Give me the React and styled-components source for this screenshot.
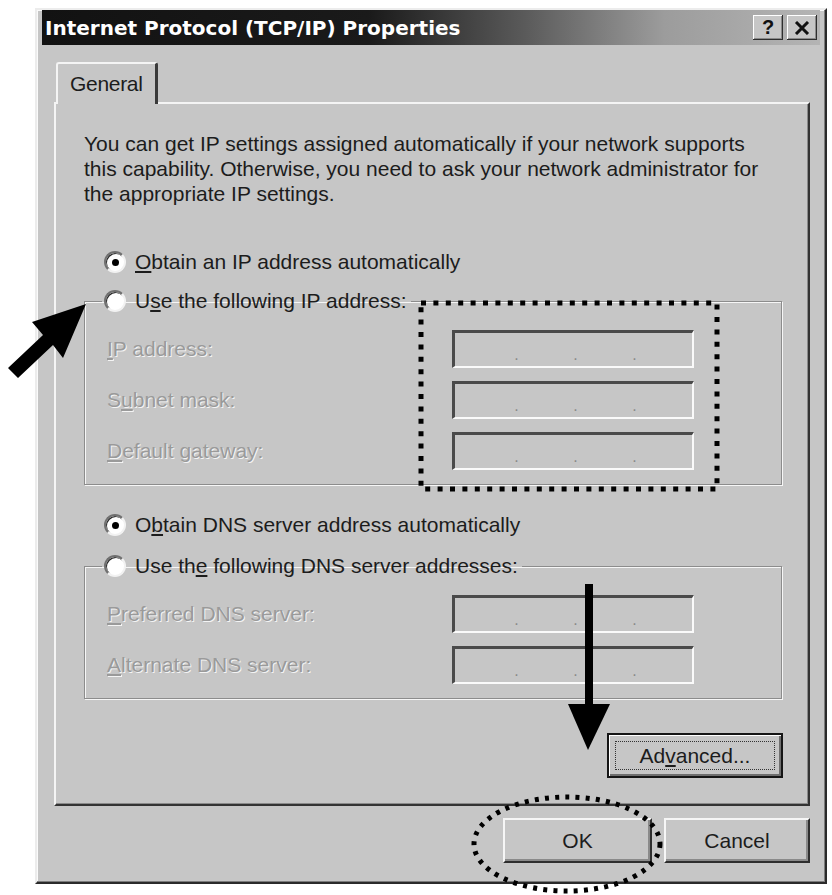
import styled, { createGlobalStyle } from "styled-components";

const GlobalStyle = createGlobalStyle`
  html, body {
    margin: 0;
    background: #fff;
  }
  body {
    font-family: "Liberation Sans", Arial, sans-serif;
  }
`;

const Mnemonic = ({ text, index }) => (
  <>
    {text.slice(0, index)}
    <U>{text[index]}</U>
    {text.slice(index + 1)}
  </>
);

const IpBox = () => (
  <IpInput>
    <Dot>.</Dot>
    <Dot>.</Dot>
    <Dot>.</Dot>
  </IpInput>
);

const Field = ({ text, index }) => (
  <FieldRow>
    <FieldLabel>
      <Mnemonic text={text} index={index} />
    </FieldLabel>
    <IpBox />
  </FieldRow>
);

const Radio = ({ checked, text, index }) => (
  <RadioRow>
    <RadioCircle>{checked && <RadioDot />}</RadioCircle>
    <span>
      <Mnemonic text={text} index={index} />
    </span>
  </RadioRow>
);

const App = () => {
  return (
    <Page>
      <GlobalStyle />
      <Window>
        <TitleBar>
          <Title>Internet Protocol (TCP/IP) Properties</Title>
          <CaptionButtons>
            <CaptionButton>?</CaptionButton>
            <CaptionButton>
              <svg width="16" height="14" viewBox="0 0 16 14">
                <path d="M2 1 L14 13 M14 1 L2 13" stroke="#111" strokeWidth="3" />
              </svg>
            </CaptionButton>
          </CaptionButtons>
        </TitleBar>

        <Body>
          <Tabs>
            <Tab>General</Tab>
          </Tabs>
          <Panel>
            <Desc>
              You can get IP settings assigned automatically if your network supports
              <br />
              this capability. Otherwise, you need to ask your network administrator for
              <br />
              the appropriate IP settings.
            </Desc>

            <Spaced $top={41}>
              <Radio checked text="Obtain an IP address automatically" index={0} />
            </Spaced>

            <Group $top={9}>
              <Legend>
                <Radio text="Use the following IP address:" index={1} />
              </Legend>
              <Fields>
                <Field text="IP address:" index={0} />
                <Field text="Subnet mask:" index={1} />
                <Field text="Default gateway:" index={0} />
              </Fields>
            </Group>

            <Spaced $top={25}>
              <Radio checked text="Obtain DNS server address automatically" index={1} />
            </Spaced>

            <Group $top={11}>
              <Legend>
                <Radio text="Use the following DNS server addresses:" index={6} />
              </Legend>
              <Fields>
                <Field text="Preferred DNS server:" index={0} />
                <Field text="Alternate DNS server:" index={0} />
              </Fields>
            </Group>

            <AdvancedRow>
              <AdvancedButton>
                <FocusRing>
                  <Mnemonic text="Advanced..." index={2} />
                </FocusRing>
              </AdvancedButton>
            </AdvancedRow>
          </Panel>

          <Footer>
            <PushButton $width={149}>OK</PushButton>
            <PushButton $width={146}>Cancel</PushButton>
          </Footer>
        </Body>
      </Window>

      <Annotations viewBox="0 0 832 895">
        <rect
          x="421"
          y="303"
          width="296"
          height="186"
          fill="none"
          stroke="#000"
          strokeWidth="5"
          strokeDasharray="5 7.4"
        />
        <ellipse
          cx="567"
          cy="844"
          rx="93"
          ry="47"
          fill="none"
          stroke="#000"
          strokeWidth="5"
          strokeDasharray="4 6.2"
        />
        <line x1="589" y1="584" x2="589" y2="710" stroke="#000" strokeWidth="8" />
        <polygon points="568,704 610,704 588,750" fill="#000" />
        <polygon points="86,304 32,322 43,335 8,368 18,378 53,345 63,358" fill="#000" />
      </Annotations>
    </Page>
  );
};

export default App;

const Page = styled.div`
  position: relative;
  width: 832px;
  height: 895px;
  box-sizing: border-box;
  padding: 8px 0 0 35px;
  overflow: hidden;
`;

const Window = styled.div`
  width: 792px;
  height: 876px;
  box-sizing: border-box;
  background: #c6c6c6;
  border-style: solid;
  border-width: 2px;
  border-color: #ececec #2a2a2a #2a2a2a #ececec;
  box-shadow: inset -1px -1px 0 #7c7c7c, inset 1px 1px 0 #fafafa;
  padding: 0 5px;
  display: flex;
  flex-direction: column;
  color: #1c1c1c;
`;

const TitleBar = styled.div`
  height: 35px;
  display: flex;
  align-items: center;
  justify-content: space-between;
  padding: 0 3px 0 3px;
  background: linear-gradient(
    90deg,
    #121212 0%,
    #1a1a1a 42%,
    #5a5a5a 62%,
    #9c9c9c 80%,
    #b4b4b4 100%
  );
`;

const Title = styled.span`
  color: #fff;
  font-family: "DejaVu Sans", "Liberation Sans", sans-serif;
  font-weight: 700;
  font-size: 20px;
  letter-spacing: 0;
  white-space: nowrap;
`;

const CaptionButtons = styled.div`
  display: flex;
  gap: 4px;
`;

const CaptionButton = styled.div`
  width: 30px;
  height: 25px;
  box-sizing: border-box;
  display: flex;
  align-items: center;
  justify-content: center;
  background: #c6c6c6;
  box-shadow: inset -1px -1px 0 #2e2e2e, inset 1px 1px 0 #fff,
    inset -2px -2px 0 #8a8a8a;
  font-weight: 700;
  font-size: 20px;
  color: #111;
`;

const Body = styled.div`
  flex: 1;
  display: flex;
  flex-direction: column;
  padding: 17px 10px 0 12px;
`;

const Tabs = styled.div`
  display: flex;
  padding-left: 2px;
  position: relative;
  z-index: 1;
`;

const Tab = styled.div`
  width: 102px;
  height: 42px;
  box-sizing: border-box;
  margin-bottom: -2px;
  padding-left: 12px;
  display: flex;
  align-items: center;
  background: #c6c6c6;
  border-top: 2px solid #f4f4f4;
  border-left: 2px solid #f4f4f4;
  border-right: 3px solid #3a3a3a;
  border-radius: 3px 3px 0 0;
  font-size: 21px;
  letter-spacing: -0.3px;
`;

const Panel = styled.div`
  height: 704px;
  box-sizing: border-box;
  display: flex;
  flex-direction: column;
  padding: 27px 26px 0 28px;
  border-style: solid;
  border-width: 2px;
  border-color: #f4f4f4 #333 #333 #f4f4f4;
  box-shadow: inset -1px -1px 0 #8a8a8a;
`;

const Desc = styled.p`
  margin: 0;
  font-size: 21px;
  line-height: 25px;
  white-space: nowrap;
`;

const Spaced = styled.div`
  margin-top: ${(p) => p.$top}px;
`;

const RadioRow = styled.div`
  height: 30px;
  display: flex;
  align-items: center;
  gap: 9px;
  padding-left: 20px;
  font-size: 21px;
  white-space: nowrap;
`;

const RadioCircle = styled.span`
  width: 22px;
  height: 22px;
  box-sizing: border-box;
  border-radius: 50%;
  display: flex;
  align-items: center;
  justify-content: center;
  background: #fff;
  border: 2px solid;
  border-color: #707070 #f2f2f2 #f2f2f2 #707070;
  box-shadow: inset 1px 1px 0 #2a2a2a;
`;

const RadioDot = styled.span`
  width: 7px;
  height: 7px;
  border-radius: 50%;
  background: #000;
`;

const U = styled.span`
  text-decoration: underline;
  text-underline-offset: 2px;
`;

const Group = styled.fieldset`
  margin: ${(p) => p.$top}px 0 0 0;
  padding: 0;
  border: 1px solid #8c8c8c;
  box-shadow: inset 1px 1px 0 #f6f6f6, 1px 1px 0 #f6f6f6;
  min-width: 0;
`;

const Legend = styled.legend`
  margin-left: 17px;
  padding: 0 4px 0 0;
  > div {
    padding-left: 2px;
  }
`;

const Fields = styled.div`
  display: flex;
  flex-direction: column;
  gap: 13px;
  padding: 14px 0 14px 22px;
`;

const FieldRow = styled.div`
  display: grid;
  grid-template-columns: 345px 242px;
  align-items: center;
`;

const FieldLabel = styled.span`
  font-size: 21px;
  color: #9a9a9a;
  text-shadow: 1px 1px 0 #f4f4f4;
  white-space: nowrap;
`;

const IpInput = styled.div`
  height: 38px;
  box-sizing: border-box;
  display: flex;
  align-items: center;
  padding-left: 59px;
  border-style: solid;
  border-width: 3px 2px 2px 3px;
  border-color: #4a4a4a #fafafa #fafafa #4a4a4a;
  background: #c6c6c6;
`;

const Dot = styled.span`
  width: 5px;
  margin-right: 54px;
  text-align: center;
  font-size: 16px;
  line-height: 1;
  padding-top: 10px;
  color: #8a8a8a;
`;

const AdvancedRow = styled.div`
  display: flex;
  justify-content: flex-end;
  margin-top: 34px;
  margin-right: -1px;
`;

const AdvancedButton = styled.div`
  width: 176px;
  height: 45px;
  box-sizing: border-box;
  padding: 6px;
  background: #c6c6c6;
  border: 2px solid #151515;
  box-shadow: inset 1px 1px 0 #fff, inset -2px -2px 0 #6e6e6e;
  font-size: 21px;
`;

const FocusRing = styled.div`
  height: 100%;
  box-sizing: border-box;
  display: flex;
  align-items: center;
  justify-content: center;
  border: 1px dotted #333;
`;

const Footer = styled.div`
  display: flex;
  justify-content: flex-end;
  gap: 12px;
  margin-top: 12px;
`;

const PushButton = styled.div`
  width: ${(p) => p.$width}px;
  height: 45px;
  box-sizing: border-box;
  display: flex;
  align-items: center;
  justify-content: center;
  background: #c6c6c6;
  border-style: solid;
  border-width: 2px;
  border-color: #f6f6f6 #2e2e2e #2e2e2e #f6f6f6;
  box-shadow: inset -2px -2px 0 #8a8a8a;
  font-size: 21px;
`;

const Annotations = styled.svg`
  position: absolute;
  top: 0;
  left: 0;
  width: 832px;
  height: 895px;
  pointer-events: none;
`;
